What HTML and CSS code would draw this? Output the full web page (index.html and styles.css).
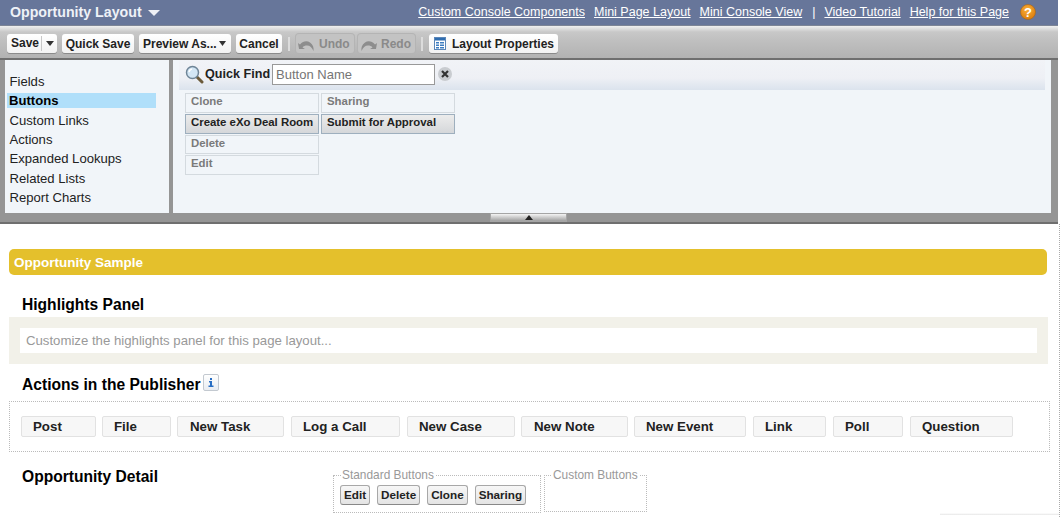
FILE: index.html
```html
<!DOCTYPE html>
<html lang="en">
<head>
<meta charset="utf-8">
<title>Opportunity Layout</title>
<link rel="stylesheet" href="styles.css">
</head>
<body>
<div class="frame">
  <header class="topbar">
    <div class="title">Opportunity Layout <svg class="title-caret" width="12" height="6" viewBox="0 0 12 6"><path d="M0 0h12L6 6z" fill="#eef0f5"/></svg></div>
    <nav class="toplinks">
      <a href="#">Custom Console Components</a>
      <a href="#">Mini Page Layout</a>
      <a href="#">Mini Console View</a>
      <span class="pipe">|</span>
      <a href="#">Video Tutorial</a>
      <a href="#">Help for this Page</a>
      <svg class="help" width="16" height="16" viewBox="0 0 16 16"><defs><radialGradient id="h" cx="45%" cy="35%" r="70%"><stop offset="0" stop-color="#fbb03a"/><stop offset="1" stop-color="#d97a0a"/></radialGradient></defs><circle cx="8" cy="8" r="7.500" fill="url(#h)" stroke="#a8641a" stroke-width=".6"/><text x="8" y="12.500" text-anchor="middle" class="help-q">?</text></svg>
    </nav>
  </header>
  <div class="toolbar">
    <div class="btn btn-save"><span class="save-label">Save</span><span class="save-arrow"><svg width="8" height="5" viewBox="0 0 8 5"><path d="M0 0h8L4 5z" fill="#333"/></svg></span></div>
    <div class="btn btn-quick">Quick Save</div>
    <div class="btn btn-preview">Preview As...<svg class="preview-caret" width="7" height="5" viewBox="0 0 7 5"><path d="M0 0h7L3.500 5z" fill="#333"/></svg></div>
    <div class="btn btn-cancel">Cancel</div>
    <span class="tsep"></span>
    <div class="btn btn-off btn-undo"><svg width="19" height="14" viewBox="0 0 19 14"><path d="M2 11 1 5l2 1.500C6 3 10 2.500 13 4.500c3 2 4 5 3.500 8.500-1.500-3.500-3.500-5.500-6.500-5.500-2 0-3.500.6-4.500 2L8 11z" fill="#8d8d8d"/></svg>Undo</div>
    <div class="btn btn-off btn-redo"><svg width="19" height="14" viewBox="0 0 19 14"><path d="M17 11l1-6-2 1.500C13 3 9 2.500 6 4.500c-3 2-4 5-3.500 8.500C4 9.500 6 7.500 9 7.500c2 0 3.500.6 4.500 2L11 11z" fill="#8d8d8d"/></svg>Redo</div>
    <span class="tsep"></span>
    <div class="btn btn-props"><svg width="12" height="13" viewBox="0 0 12 13"><rect x=".5" y=".5" width="11" height="12" fill="#fff" stroke="#5b86b8"/><rect x="1" y="1" width="10" height="2.500" fill="#2f6db0"/><path d="M2 5h3v1.500H2zM6 5h4v1.500H6zM2 7.500h3V9H2zM6 7.500h4V9H6zM2 10h3v1.500H2zM6 10h4v1.500H6z" fill="#3d7cc0"/></svg><span>Layout Properties</span></div>
  </div>
  <div class="palette">
    <ul class="cats">
      <li>Fields</li>
      <li class="cat-on">Buttons</li>
      <li>Custom Links</li>
      <li>Actions</li>
      <li>Expanded Lookups</li>
      <li>Related Lists</li>
      <li>Report Charts</li>
    </ul>
    <div class="picker">
      <div class="findbar">
        <svg class="lens" width="19" height="19" viewBox="0 0 19 19"><path d="M11 11l6 6" stroke="#6b5a3a" stroke-width="3" stroke-linecap="round"/><circle cx="7.500" cy="7.500" r="6" fill="#d3e6f5" stroke="#6f8597" stroke-width="1.500"/><path d="M4 7a4 4 0 0 1 3-3" stroke="#fff" stroke-width="1.500" fill="none"/></svg>
        <span class="find-label">Quick Find</span>
        <div class="find-input">Button Name</div>
        <svg class="find-clear" width="14" height="14" viewBox="0 0 14 14"><circle cx="7" cy="7" r="7" fill="#c9ccd0"/><path d="M4 4l6 6m0-6l-6 6" stroke="#333" stroke-width="2.200"/></svg>
      </div>
      <div class="chips">
        <div class="chip-col">
          <div class="chip">Clone</div>
          <div class="chip chip-used">Create eXo Deal Room</div>
          <div class="chip chip-short">Delete</div>
          <div class="chip">Edit</div>
        </div>
        <div class="chip-col">
          <div class="chip">Sharing</div>
          <div class="chip chip-used">Submit for Approval</div>
        </div>
      </div>
    </div>
  </div>
  <div class="frame-foot">
    <div class="collapse"><svg width="8" height="5" viewBox="0 0 8 5"><path d="M0 5h8L4 0z" fill="#222"/></svg></div>
  </div>
</div>
<main class="layout">
  <div class="banner">Opportunity Sample</div>
  <h2 class="section-h section-h-hl">Highlights Panel</h2>
  <div class="hl-panel"><div class="hl-inner">Customize the highlights panel for this page layout...</div></div>
  <h2 class="section-h section-h-pub">Actions in the Publisher <span class="info"><svg width="6" height="9" viewBox="0 0 6 9"><path d="M2 0h2v2H2zM1 3h3v4.500h1.500V9H.5V7.500H2V4.500H1z" fill="#2a6fc4"/></svg></span></h2>
  <div class="pub-box">
    <div class="act act-1">Post</div>
    <div class="act act-2">File</div>
    <div class="act act-3">New Task</div>
    <div class="act act-4">Log a Call</div>
    <div class="act act-5">New Case</div>
    <div class="act act-6">New Note</div>
    <div class="act act-7">New Event</div>
    <div class="act act-8">Link</div>
    <div class="act act-9">Poll</div>
    <div class="act act-10">Question</div>
  </div>
  <div class="detail-row">
    <h2 class="section-h section-h-det">Opportunity Detail</h2>
    <fieldset class="fs fs-std">
      <legend>Standard Buttons</legend>
      <div class="std-btns">
        <div class="sbtn">Edit</div>
        <div class="sbtn">Delete</div>
        <div class="sbtn">Clone</div>
        <div class="sbtn">Sharing</div>
      </div>
    </fieldset>
    <fieldset class="fs fs-cust">
      <legend>Custom Buttons</legend>
    </fieldset>
  </div>
  <div class="page-shadow"></div>
</main>
</body>
</html>
```
FILE: styles.css
```css
* { box-sizing: border-box; }
html, body { margin: 0; padding: 0; }
body {
  width: 1062px;
  height: 517px;
  overflow: hidden;
  background: #fff;
  font-family: "Liberation Sans", Arial, sans-serif;
  color: #000;
}

/* top frame */
.frame { width: 1058px; background: #959595; }
.topbar {
  height: 26px;
  background: #67769a;
  border-bottom: 1px solid #7d8596;
  display: flex;
  justify-content: space-between;
  align-items: center;
  padding: 0 22px 1px 10px;
}
.title { font-size: 14.200px; font-weight: bold; color: #eef1f7; white-space: nowrap; }
.title-caret { margin-left: 2px; vertical-align: 1px; }
.toplinks { display: flex; align-items: center; font-size: 12.500px; color: #fff; white-space: nowrap; }
.toplinks a { color: #fff; text-decoration: underline; margin-right: 9px; }
.pipe { margin: 0 9px 0 1px; }
.help { margin-left: 2px; }
.help-q { font: bold 13px "Liberation Sans", Arial, sans-serif; fill: #fff; }

.toolbar {
  height: 34px;
  background: linear-gradient(#f0f0f0 0, #c8c8c8 6px, #c0c0c0 14px, #b2b2b2 100%);
  border-bottom: 2px solid #6f6f6f;
  display: flex;
  align-items: center;
  padding: 3px 0 0 7px;
}
.btn {
  height: 19px;
  background: linear-gradient(#fff, #f2f2f2);
  border-radius: 3px;
  box-shadow: 0 1px 0 #8a8a8a;
  font-size: 12px;
  font-weight: bold;
  color: #222;
  display: flex;
  align-items: center;
  white-space: nowrap;
  flex: none;
}
.btn-save { width: 50px; margin-right: 5px; padding-left: 4px; }
.save-label { width: 31px; border-right: 1px solid #c8c8c8; line-height: 15px; }
.save-arrow { width: 15px; display: flex; justify-content: center; }
.btn-quick { width: 72px; margin-right: 5px; justify-content: center; }
.btn-preview { width: 92px; margin-right: 5px; padding-left: 4px; }
.preview-caret { margin-left: 2px; }
.btn-cancel { width: 46px; justify-content: center; }
.tsep { width: 2px; height: 14px; margin: 0 6px; background: #dcdcdc; flex: none; }
.btn-off { background: #c3c3c3; color: #8a8a8a; box-shadow: 0 0 0 1px #b4b4b4; }
.btn-off svg { margin: 2px 3px 0 1px; }
.btn-undo { width: 58px; margin-right: 4px; }
.btn-redo { width: 57px; }
.btn-props { width: 129px; padding-left: 5px; }
.btn-props span { margin-left: 6px; }

.palette { display: flex; height: 153px; padding: 0 7px 0 5px; }
.cats {
  list-style: none;
  margin: 0;
  padding: 14px 0 0 2px;
  width: 164px;
  flex: none;
  background: #f1f5f9;
  font-size: 13.100px;
  color: #222;
}
.cats li { height: 15px; line-height: 15px; padding-left: 2.500px; width: 149px; margin-bottom: 4.330px; white-space: nowrap; }
.cats .cat-on { background: #b0dffa; font-weight: bold; color: #000; padding-left: 2px; }
.picker { margin-left: 4px; flex: 1; background: #f1f5f9; padding: 0 6px; }
.findbar {
  height: 30px;
  background: linear-gradient(#f1f3f7 0, #eef0f5 60%, #dbe3ed 100%);
  display: flex;
  align-items: center;
  padding: 0 0 2px 6px;
}
.lens { flex: none; }
.find-label { font-size: 12.600px; font-weight: bold; color: #222; margin-left: 1px; white-space: nowrap; }
.find-input {
  width: 163px;
  height: 21px;
  margin-left: 2px;
  padding: 2px 3px;
  background: #fff;
  border: 1px solid #999;
  font-size: 13px;
  line-height: 16px;
  color: #757575;
}
.find-clear { margin-left: 3px; }
.chips { display: flex; gap: 2px; padding: 3px 0 0 6px; }
.chip-col { width: 134px; display: flex; flex-direction: column; gap: 1px; }
.chip {
  height: 20px;
  border: 1px solid #d4dadf;
  background: #f1f5f9;
  font-size: 11.400px;
  font-weight: bold;
  line-height: 15px;
  padding-left: 5px;
  color: #7a7a7a;
  white-space: nowrap;
}
.chip-short { height: 19px; }
.chip-used {
  background: linear-gradient(#ececec, #d5d7da);
  border-color: #9eafbe;
  color: #222;
}
.frame-foot {
  height: 11px;
  border-bottom: 2px solid #6f6f6f;
  display: flex;
  justify-content: center;
  padding-right: 1px;
}
.collapse {
  width: 77px;
  height: 9px;
  background: linear-gradient(#f4f4f4, #9f9f9f);
  border: 1px solid #a5a5a5;
  display: flex;
  justify-content: center;
  align-items: center;
}

/* layout canvas */
.layout {
  width: 1060px;
  height: 293px;
  border-right: 1px dotted #aaa;
  padding: 25px 0 0 9px;
  overflow: hidden;
}
.banner {
  width: 1038px;
  height: 26px;
  background: #e4c02c;
  border-radius: 5px;
  color: #fff;
  font-size: 13.500px;
  font-weight: bold;
  line-height: 27px;
  padding-left: 5px;
}
.section-h { margin: 0 0 0 13px; font-size: 15.600px; font-weight: bold; line-height: 18px; color: #000; }
.section-h-hl { margin-top: 21px; }
.hl-panel { width: 1039px; height: 47px; margin-top: 3px; background: #f2f1e9; padding: 11px 11px 0; }
.hl-inner { height: 25px; background: #fff; color: #999; font-size: 13.200px; line-height: 25px; padding-left: 6px; }
.section-h-pub { margin-top: 12px; display: flex; align-items: center; gap: 3px; }
.info {
  width: 16px;
  height: 17px;
  margin-top: -5px;
  background: linear-gradient(#fff, #e9edf2);
  border: 1px solid #c3c9d0;
  border-radius: 2px;
  display: flex;
  align-items: center;
  justify-content: center;
}
.pub-box {
  width: 1041px;
  height: 51px;
  margin-top: 7px;
  border: 1px dotted #bbb;
  padding: 14px 0 0 11px;
  display: flex;
}
.act {
  height: 21px;
  background: #f7f7f7;
  border: 1px solid #e2e2e2;
  border-radius: 2px;
  font-size: 13.300px;
  font-weight: bold;
  line-height: 19px;
  padding-left: 11px;
  color: #222;
  flex: none;
  white-space: nowrap;
}
.act-1 { width: 75px; margin-right: 6px; }
.act-2 { width: 69px; margin-right: 6px; }
.act-3 { width: 107px; margin-right: 7px; padding-left: 12px; }
.act-4 { width: 109px; margin-right: 7px; }
.act-5 { width: 108px; margin-right: 6px; }
.act-6 { width: 107px; margin-right: 6px; padding-left: 12px; }
.act-7 { width: 112px; margin-right: 7px; }
.act-8 { width: 73px; margin-right: 7px; }
.act-9 { width: 70px; margin-right: 7px; }
.act-10 { width: 103px; }

.detail-row { display: flex; align-items: flex-start; margin-top: 16px; }
.section-h-det { width: 311px; flex: none; }
.fs {
  margin: 1px 0 0;
  padding: 0;
  border: 1px dotted #bbb;
  min-width: 0;
  flex: none;
}
.fs legend { line-height: 13px; color: #999; padding: 0 1px; margin-left: 7px; white-space: nowrap; font-size: 11.900px; }
.fs-std { width: 208px; height: 44px; margin-right: 3px; }
.fs-cust { width: 103px; height: 43px; }
.std-btns { display: flex; gap: 7px; padding: 3px 0 0 6px; }
.sbtn {
  height: 20px;
  padding: 0 3px;
  background: linear-gradient(#f7f7f7, #e4e4e4);
  border: 1px solid #a8a8a8;
  border-bottom-color: #888;
  border-radius: 3px;
  font-size: 11.700px;
  font-weight: bold;
  line-height: 18px;
  color: #222;
  white-space: nowrap;
}
.page-shadow {
  height: 2px;
  margin: 0 0 0 931px;
  background: linear-gradient(#fff, #e6e6e6);
}
```
